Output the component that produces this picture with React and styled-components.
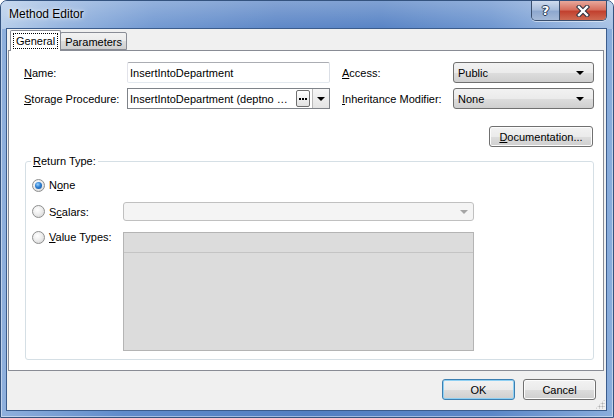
import React from 'react'
import styled, { createGlobalStyle } from 'styled-components'

const GlobalStyle = createGlobalStyle`
  html, body { margin:0; padding:0; background:#fff; }
  body {
    font-family: "Segoe UI", "Liberation Sans", Arial, sans-serif;
    font-size:11px;
    color:#000;
  }
  * { box-sizing:border-box; }
`

const Window = styled.div`
  width:614px;
  height:418px;
  display:flex;
  flex-direction:column;
  border:1px solid #34537f;
  border-radius:7px 7px 0 0;
  overflow:hidden;
  background: linear-gradient(90deg, #8fb0dd 0%, #5f8bcb 20%, #527fc2 50%, #5b87c8 80%, #8aaddc 100%);
  box-shadow: inset 0 0 0 1px rgba(255,255,255,0.45);
`

const TitleBar = styled.div`
  height:28px;
  flex:none;
  display:flex;
  align-items:flex-start;
  padding-left:8px;
  background:
    linear-gradient(180deg, rgba(255,255,255,0.28) 0%, rgba(255,255,255,0.05) 100%),
    linear-gradient(90deg, #b3cbe9 0%, #8fb0dd 10%, #6a93cf 25%, #5581c4 45%, #4f7dc2 62%, #6690cd 80%, #a3bfe4 100%);
`

const Title = styled.div`
  font-size:12px;
  line-height:27px;
  color:#000;
  text-shadow: 0 0 6px rgba(255,255,255,0.9), 0 0 3px rgba(255,255,255,0.8);
`

const CaptionButtons = styled.div`
  margin-left:auto;
  margin-right:6px;
  display:flex;
  border:1px solid #3a4f6e;
  border-top:none;
  border-radius:0 0 5px 5px;
  overflow:hidden;
  box-shadow: 0 1px 0 rgba(255,255,255,0.5);
`

const CaptionButton = styled.div`
  width:${p => p.$w}px;
  height:19px;
  display:flex;
  align-items:center;
  justify-content:center;
  color:#fff;
  font-family:"DejaVu Sans", sans-serif;
  font-weight:bold;
  font-size:13px;
  text-shadow: 0 0 1px #1c2c44, 1px 0 0 #2b3f5e, -1px 0 0 #2b3f5e, 0 1px 0 #2b3f5e, 0 -1px 0 #2b3f5e;
  background: ${p => p.$close
    ? 'linear-gradient(180deg, #e8a89c 0%, #d7705f 45%, #c2412f 55%, #cf6a52 100%)'
    : 'linear-gradient(180deg, #cfdcee 0%, #a9bedc 45%, #8ea8cf 55%, #a5bad8 100%)'};
  & + & { border-left:1px solid #3a4f6e; }
`

const Client = styled.div`
  flex:1;
  margin:0 7px 7px 6px;
  background:#f0f0f0;
  display:flex;
  flex-direction:column;
  position:relative;
  box-shadow: 0 0 0 1px #3b5c8c;
`

const TabStrip = styled.div`
  height:21px;
  display:flex;
  align-items:flex-end;
  padding-left:3px;
`

const Tab = styled.div`
  position:relative;
  z-index:${p => (p.$active ? 2 : 1)};
  height:${p => (p.$active ? 21 : 18)}px;
  margin-bottom:${p => (p.$active ? -1 : 0)}px;
  margin-left:${p => (p.$active ? 0 : -1)}px;
  padding:${p => (p.$active ? '2px 2px 0' : '2px 4px 0')};
  border:1px solid #898c95;
  border-bottom:${p => (p.$active ? 'none' : '1px solid #898c95')};
  border-radius:2px 2px 0 0;
  background:${p => (p.$active ? '#fff' : 'linear-gradient(180deg, #f2f2f2 0%, #ebebeb 50%, #dddddd 51%, #cfcfcf 100%)')};
  font-size:11px;
  line-height:14px;
`

const FocusText = styled.span`
  display:inline-block;
  padding:0 2px;
  border:1px dotted #000;
`

const Panel = styled.div`
  height:321px;
  margin:0 2px 0 1px;
  background:#fff;
  border:1px solid #898c95;
  padding:11px 9px 10px 15px;
  display:flex;
  flex-direction:column;
`

const FormGrid = styled.div`
  display:grid;
  grid-template-columns:103px 203px 123px 141px;
  grid-auto-rows:21px;
  row-gap:5px;
  align-items:center;
`

const Label = styled.div`
  padding-left:${p => p.$indent || 0}px;
  white-space:nowrap;
`

const TextBox = styled.div`
  height:21px;
  border:1px solid;
  border-color:#abadb3 #dbdfe6 #e3e9ef #e2e3ea;
  border-radius:2px;
  padding:0 2px;
  display:flex;
  align-items:center;
  background:#fff;
`

const ComboEdit = styled.div`
  height:21px;
  border:1px solid #7f8389;
  display:flex;
  align-items:stretch;
  background:#fff;
`

const ComboText = styled.div`
  flex:1;
  min-width:0;
  padding-left:2px;
  display:flex;
  align-items:center;
  overflow:hidden;
  white-space:nowrap;
`

const EllipsisButton = styled.div`
  width:14px;
  margin:1px 2px 1px 0;
  border:1px solid #6f6f6f;
  border-radius:2px;
  background:linear-gradient(180deg, #ffffff 0%, #f0f0f0 50%, #e2e2e2 100%);
  display:flex;
  align-items:center;
  justify-content:center;
  gap:1px;
`

const Dot = styled.span`
  width:2px;
  height:2px;
  background:#000;
`

const ArrowPart = styled.div`
  width:17px;
  border-left:1px solid #b9b9b9;
  background:linear-gradient(180deg, #f6f6f6 0%, #e4e4e4 100%);
  display:flex;
  align-items:center;
  justify-content:center;
`

const Arrow = styled.span`
  width:0;
  height:0;
  border-left:4px solid transparent;
  border-right:4px solid transparent;
  border-top:4px solid ${p => p.$color || '#000'};
`

const DropList = styled.div`
  height:21px;
  border:1px solid #707070;
  border-radius:3px;
  padding:0 9px 0 4px;
  display:flex;
  align-items:center;
  justify-content:space-between;
  background:linear-gradient(180deg, #f2f2f2 0%, #ebebeb 50%, #dddddd 51%, #cfcfcf 100%);
`

const DocRow = styled.div`
  display:flex;
  justify-content:flex-end;
  margin-top:17px;
  padding-right:1px;
`

const Button = styled.div`
  width:${p => p.$w}px;
  height:21px;
  border:1px solid ${p => (p.$default ? '#3c7fb1' : '#707070')};
  border-radius:3px;
  display:flex;
  align-items:center;
  justify-content:center;
  background:linear-gradient(180deg, #f2f2f2 0%, #ebebeb 50%, #dddddd 51%, #cfcfcf 100%);
  box-shadow:${p => (p.$default ? 'inset 0 0 0 1px #8fd0f3' : 'inset 0 0 0 1px #fcfcfc')};
`

const GroupBox = styled.div`
  position:relative;
  flex:1;
  margin:14px 0 0 1px;
  border:1px solid #d5dfe5;
  border-radius:3px;
  padding:13px 19px 7px 6px;
`

const Legend = styled.div`
  position:absolute;
  top:-8px;
  left:5px;
  padding:0 2px;
  background:#fff;
  line-height:14px;
`

const GroupGrid = styled.div`
  display:grid;
  grid-template-columns:91px 351px;
  grid-template-rows:20px 26px 130px;
`

const RadioLabel = styled.div`
  display:flex;
  align-items:center;
  gap:4px;
  height:${p => p.$h || 20}px;
  align-self:${p => p.$align || 'center'};
  margin-top:${p => p.$top || 0}px;
`

const Radio = styled.span`
  position:relative;
  width:13px;
  height:13px;
  flex:none;
  border-radius:50%;
  border:1px solid #8e8f8f;
  background:radial-gradient(circle at 40% 35%, #ffffff 0%, #eeeeee 45%, #cfcfcf 100%);
  &::after {
    content:'';
    display:${p => (p.$checked ? 'block' : 'none')};
    position:absolute;
    left:2px;
    top:2px;
    width:7px;
    height:7px;
    border-radius:50%;
    background:radial-gradient(circle at 40% 35%, #9ad2ff 0%, #2f7fd0 45%, #0e4d9a 100%);
  }
`

const DisabledCombo = styled.div`
  height:19px;
  align-self:end;
  border:1px solid #c0c0c0;
  border-radius:3px;
  background:#f4f4f4;
  display:flex;
  align-items:center;
  justify-content:flex-end;
  padding-right:5px;
`

const ListBox = styled.div`
  height:119px;
  align-self:end;
  border:1px solid #b4b4b4;
  background:#dcdcdc;
`

const ListHeader = styled.div`
  height:20px;
  border-bottom:1px solid #c4c4c4;
`

const BottomBar = styled.div`
  flex:1;
  display:flex;
  justify-content:flex-end;
  align-items:flex-start;
  gap:8px;
  padding:8px 10px 0 0;
`

const Grip = styled.div`
  position:absolute;
  right:1px;
  bottom:1px;
  width:10px;
  height:10px;
  background-image:radial-gradient(circle, #b0b0b0 0.8px, transparent 1.2px);
  background-size:3px 3px;
  clip-path:polygon(100% 0, 100% 100%, 0 100%);
`

const CloseIcon = () => (
  <svg width="14" height="12" viewBox="0 0 14 12">
    <path d="M3 2 L11 10 M11 2 L3 10" stroke="#2a2f3d" strokeWidth="4.4" strokeLinecap="square" />
    <path d="M3 2 L11 10 M11 2 L3 10" stroke="#fff" strokeWidth="2.4" strokeLinecap="square" />
  </svg>
)

export default function App() {
  return (
    <>
      <GlobalStyle />
      <Window>
        <TitleBar>
          <Title>Method Editor</Title>
          <CaptionButtons>
            <CaptionButton $w={27}>?</CaptionButton>
            <CaptionButton $w={47} $close><CloseIcon /></CaptionButton>
          </CaptionButtons>
        </TitleBar>
        <Client>
          <TabStrip>
            <Tab $active><FocusText>General</FocusText></Tab>
            <Tab>Parameters</Tab>
          </TabStrip>
          <Panel>
            <FormGrid>
              <Label><u>N</u>ame:</Label>
              <TextBox>InsertIntoDepartment</TextBox>
              <Label $indent={12}><u>A</u>ccess:</Label>
              <DropList>Public<Arrow /></DropList>

              <Label><u>S</u>torage Procedure:</Label>
              <ComboEdit>
                <ComboText>InsertIntoDepartment (deptno …</ComboText>
                <EllipsisButton><Dot /><Dot /><Dot /></EllipsisButton>
                <ArrowPart><Arrow /></ArrowPart>
              </ComboEdit>
              <Label $indent={12}><u>I</u>nheritance Modifier:</Label>
              <DropList>None<Arrow /></DropList>
            </FormGrid>

            <DocRow>
              <Button $w={104}><span><u>D</u>ocumentation...</span></Button>
            </DocRow>

            <GroupBox>
              <Legend><u>R</u>eturn Type:</Legend>
              <GroupGrid>
                <RadioLabel><Radio $checked /><span>N<u>o</u>ne</span></RadioLabel>
                <div />
                <RadioLabel $h={19} $align="end"><Radio /><span>S<u>c</u>alars:</span></RadioLabel>
                <DisabledCombo><Arrow $color="#a5a5a5" /></DisabledCombo>
                <RadioLabel $h={14} $align="start" $top={9}><Radio /><span><u>V</u>alue Types:</span></RadioLabel>
                <ListBox><ListHeader /></ListBox>
              </GroupGrid>
            </GroupBox>
          </Panel>
          <BottomBar>
            <Button $w={73} $default>OK</Button>
            <Button $w={73}>Cancel</Button>
          </BottomBar>
          <Grip />
        </Client>
      </Window>
    </>
  )
}
